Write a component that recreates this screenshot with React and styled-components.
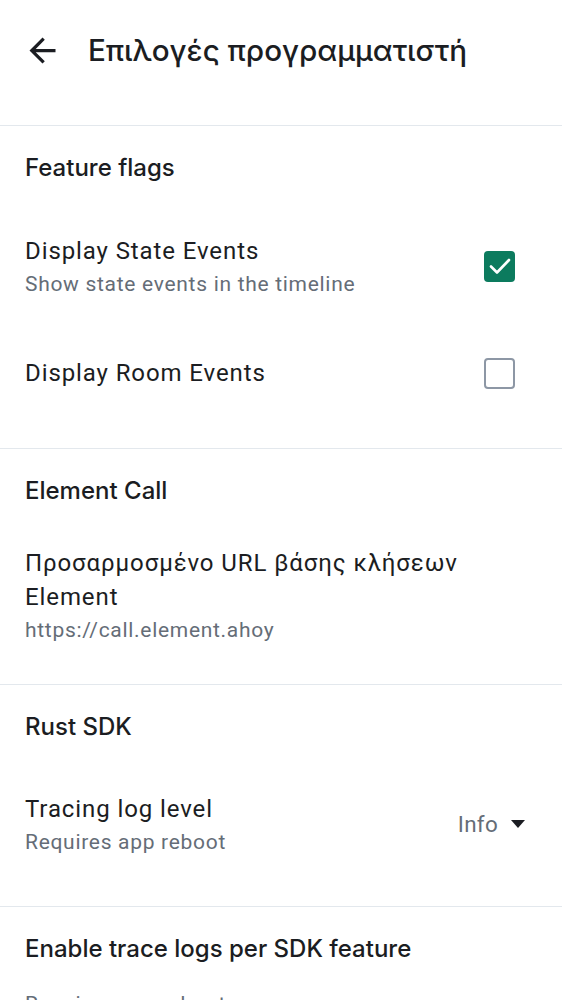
import React from 'react';
import styled, { createGlobalStyle } from 'styled-components';

const GlobalStyle = createGlobalStyle`
  html, body {
    margin: 0;
    padding: 0;
    background: #ffffff;
  }
  body {
    font-family: Roboto, "Noto Sans", sans-serif;
    color: #1b1d22;
    overflow: hidden;
  }
`;

const Screen = styled.div`
  width: 562px;
  height: 1000px;
  overflow: hidden;
  background: #ffffff;
`;

const TopBar = styled.div`
  display: flex;
  align-items: center;
  height: 100px;
  margin-bottom: 25px;
`;

const BackButton = styled.button`
  display: flex;
  align-items: center;
  justify-content: center;
  width: 39px;
  height: 39px;
  margin-left: 23px;
  margin-right: 26px;
  padding: 0;
  border: none;
  background: none;
  color: #1b1d22;
`;

const Title = styled.h1`
  margin: 0;
  font-family: Inter, Roboto, "Noto Sans", sans-serif;
  font-size: 29.6px;
  font-weight: 500;
  letter-spacing: 0;
`;

const Section = styled.section`
  border-top: 1px solid #e3e8ed;
  padding-bottom: 22px;
`;

const SectionHeader = styled.div`
  padding: 27px 25px 22px;
  font-family: Inter, Roboto, "Noto Sans", sans-serif;
  font-size: 24px;
  line-height: 30px;
  font-weight: 500;
  letter-spacing: 0;
  color: #1b1d22;
`;

const Row = styled.div`
  display: flex;
  align-items: center;
  padding: ${({ $pad }) => $pad || '18px 0'};
  padding-left: 25px;
`;

const RowText = styled.div`
  flex: 1;
  min-width: 0;
  padding-right: ${({ $wrap }) => ($wrap ? '80px' : '0')};
`;

const RowTitle = styled.div`
  font-size: 24px;
  line-height: 34px;
  letter-spacing: 0.9px;
  color: #1b1d22;
`;

const RowSub = styled.div`
  margin-top: 2px;
  font-size: 21px;
  line-height: 28px;
  letter-spacing: 0.7px;
  color: #656d77;
`;

const CheckBox = styled.div`
  flex: none;
  box-sizing: border-box;
  width: 31px;
  height: 31px;
  margin-right: 47px;
  margin-left: 16px;
  border-radius: 4px;
  display: flex;
  align-items: center;
  justify-content: center;
  background: ${({ $checked }) => ($checked ? '#0c7b5e' : 'transparent')};
  border: ${({ $checked }) => ($checked ? 'none' : '2.5px solid #8d97a5')};
`;

const Dropdown = styled.div`
  flex: none;
  display: flex;
  align-items: center;
  gap: 13px;
  margin-right: 37px;
  margin-left: 16px;
  font-size: 22.4px;
  letter-spacing: 0.3px;
  color: #656d77;
`;

const Arrow = () => (
  <svg width="39" height="39" viewBox="0 0 24 24" fill="currentColor">
    <path d="M20 11H7.83l5.59-5.59L12 4l-8 8 8 8 1.41-1.41L7.83 13H20v-2z" />
  </svg>
);

const Check = () => (
  <svg width="28" height="28" viewBox="0 0 28 28" fill="none">
    <path d="M5 14.5l6 6L23 8" stroke="#ffffff" strokeWidth="2.6" strokeLinecap="round" strokeLinejoin="round" />
  </svg>
);

const Caret = () => (
  <svg width="14" height="8" viewBox="0 0 14 8" fill="#1b1d22">
    <path d="M0 0h14L7 8z" />
  </svg>
);

const App = () => {
  return (
    <Screen>
      <GlobalStyle />
      <TopBar>
        <BackButton aria-label="back">
          <Arrow />
        </BackButton>
        <Title>Επιλογές προγραμματιστή</Title>
      </TopBar>

      <Section>
        <SectionHeader>Feature flags</SectionHeader>
        <Row $pad="29px 0">
          <RowText>
            <RowTitle>Display State Events</RowTitle>
            <RowSub>Show state events in the timeline</RowSub>
          </RowText>
          <CheckBox $checked>
            <Check />
          </CheckBox>
        </Row>
        <Row $pad="29px 0 36px">
          <RowText>
            <RowTitle>Display Room Events</RowTitle>
          </RowText>
          <CheckBox />
        </Row>
      </Section>

      <Section>
        <SectionHeader>Element Call</SectionHeader>
        <Row>
          <RowText $wrap>
            <RowTitle>Προσαρμοσμένο URL βάσης κλήσεων Element</RowTitle>
            <RowSub>https://call.element.ahoy</RowSub>
          </RowText>
        </Row>
      </Section>

      <Section>
        <SectionHeader>Rust SDK</SectionHeader>
        <Row $pad="28px 0">
          <RowText>
            <RowTitle>Tracing log level</RowTitle>
            <RowSub>Requires app reboot</RowSub>
          </RowText>
          <Dropdown>
            Info
            <Caret />
          </Dropdown>
        </Row>
      </Section>

      <Section>
        <SectionHeader>Enable trace logs per SDK feature</SectionHeader>
        <Row $pad="2px 0 0">
          <RowText>
            <RowSub>Requires app reboot</RowSub>
          </RowText>
        </Row>
      </Section>
    </Screen>
  );
};

export default App;
